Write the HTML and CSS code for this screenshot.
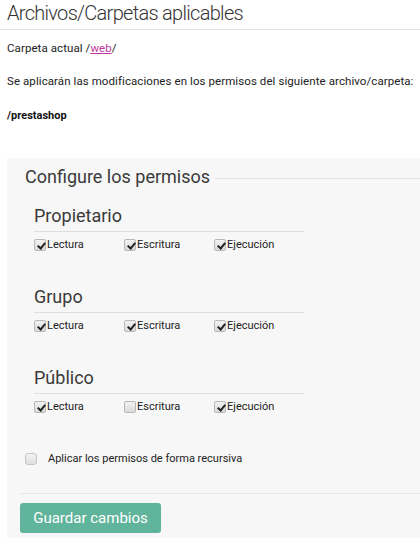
FILE: index.html
```html
<!DOCTYPE html>
<html lang="es">
<head>
<meta charset="utf-8">
<link rel="stylesheet" href="styles.css">
</head>
<body>
<h2 class="title">Archivos/Carpetas aplicables</h2>
<div class="info">
  <p class="line">Carpeta actual /<a href="#" class="link">web</a>/</p>
  <p class="line">Se aplicarán las modificaciones en los permisos del siguiente archivo/carpeta:</p>
  <p class="line bold">/prestashop</p>
</div>
<form class="panel">
  <div class="legend"><span>Configure los permisos</span></div>
  <div class="group">
    <h3 class="group-title">Propietario</h3>
    <div class="checks">
      <label class="check"><span class="box on"></span>Lectura</label>
      <label class="check"><span class="box on"></span>Escritura</label>
      <label class="check"><span class="box on"></span>Ejecución</label>
    </div>
  </div>
  <div class="group">
    <h3 class="group-title">Grupo</h3>
    <div class="checks">
      <label class="check"><span class="box on"></span>Lectura</label>
      <label class="check"><span class="box on"></span>Escritura</label>
      <label class="check"><span class="box on"></span>Ejecución</label>
    </div>
  </div>
  <div class="group">
    <h3 class="group-title">Público</h3>
    <div class="checks">
      <label class="check"><span class="box on"></span>Lectura</label>
      <label class="check"><span class="box"></span>Escritura</label>
      <label class="check"><span class="box on"></span>Ejecución</label>
    </div>
  </div>
  <label class="recursive"><span class="rbox"></span>Aplicar los permisos de forma recursiva</label>
  <div class="actions">
    <button type="button" class="btn">Guardar cambios</button>
  </div>
</form>
</body>
</html>
```
FILE: styles.css
```css
html, body {
  margin: 0;
  padding: 0;
  background: #fff;
  font-family: Roboto, "Liberation Sans", sans-serif;
  color: #333;
}
.title {
  margin: 0;
  padding: 2px 0 4px 7px;
  font-size: 20px;
  font-weight: 300;
  letter-spacing: -0.7px;
  line-height: 23px;
  color: #333;
  border-bottom: 1px solid #e3e3e3;
}
.info {
  padding: 0 7px;
}
.line {
  margin: 0;
  font-size: 11.5px;
  letter-spacing: 0.08px;
  white-space: nowrap;
  line-height: 14px;
  color: #222;
}
.line:nth-child(1) { margin-top: 11px; }
.line:nth-child(2) { margin-top: 19px; }
.line:nth-child(3) { margin-top: 21px; }
.bold { font-weight: 700; color: #111; font-size: 11px; letter-spacing: 0; }
.link {
  color: #c2399d;
  text-decoration: underline;
}
.panel {
  margin: 35px 0 0 7px;
  background: #f7f7f7;
  padding: 8px 0 6px 0;
}
.legend {
  display: flex;
  align-items: center;
  padding-left: 18px;
  font-size: 18px;
  line-height: 22px;
  color: #3a3a3a;
}
.legend::after {
  content: "";
  flex: 1;
  height: 1px;
  background: #e3e3e3;
  margin-left: 5px;
  margin-top: 2px;
}
.group {
  margin: 17px 0 0 27px;
  width: 270px;
}
.group + .group { margin-top: 34px; }
.group-title {
  margin: 0;
  font-size: 18px;
  font-weight: 400;
  line-height: 22px;
  color: #3a3a3a;
  padding-bottom: 4px;
  border-bottom: 1px solid #dedede;
}
.checks {
  display: flex;
  margin-top: 6px;
}
.check {
  display: flex;
  align-items: center;
  width: 90px;
  font-size: 11px;
  line-height: 14px;
  color: #222;
}
.box {
  width: 12px;
  height: 12px;
  border: 1px solid #b8b8b8;
  border-radius: 2px;
  background: linear-gradient(#f2f2f2, #dadada);
  box-sizing: border-box;
  position: relative;
  margin-right: 1px;
}
.box.on::after {
  content: "";
  position: absolute;
  left: 3.5px;
  top: 0.5px;
  width: 3px;
  height: 6px;
  border: solid #222;
  border-width: 0 2px 2px 0;
  transform: rotate(40deg);
}
.recursive {
  display: flex;
  align-items: center;
  margin: 38px 0 0 18px;
  font-size: 11px;
  line-height: 14px;
  color: #222;
}
.rbox {
  width: 12px;
  height: 12px;
  box-sizing: border-box;
  border: 1px solid #c5c5c5;
  border-radius: 3px;
  background: linear-gradient(#f2f2f2, #e0e0e0);
  margin-right: 11px;
}
.actions {
  margin: 27px 0 0 13px;
  padding-top: 9px;
  border-top: 1px solid #e6e6e6;
}
.btn {
  display: block;
  width: 141px;
  height: 30px;
  background: #5fb49b;
  color: #fff;
  border: none;
  border-radius: 3px;
  font-family: Roboto, "Liberation Sans", sans-serif;
  font-size: 15px;
  padding: 0;
}
```
